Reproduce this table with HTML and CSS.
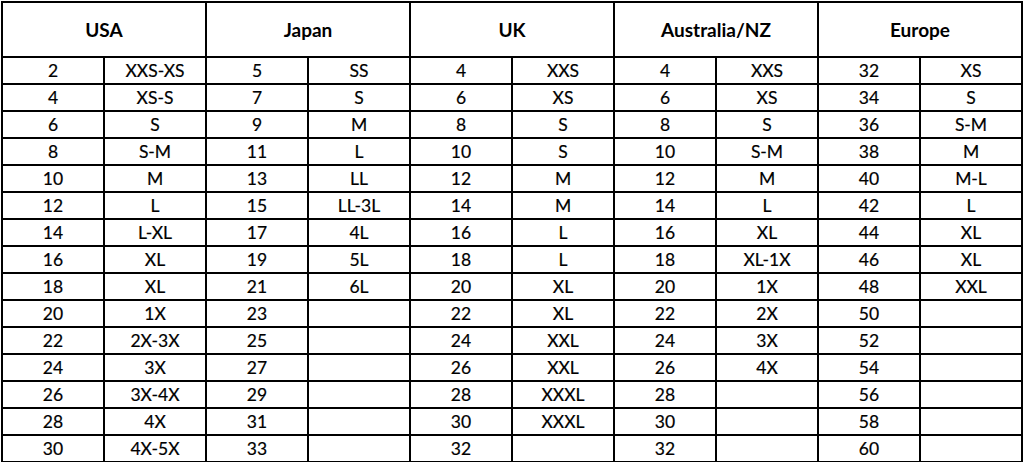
FILE: index.html
```html
<!DOCTYPE html>
<html>
<head>
<meta charset="utf-8">
<link rel="stylesheet" href="styles.css">
</head>
<body>
<table class="sizes">
<colgroup>
<col><col><col><col><col><col><col><col><col><col>
</colgroup>
<thead>
<tr class="head"><th colspan="2">USA</th><th colspan="2">Japan</th><th colspan="2">UK</th><th colspan="2">Australia/NZ</th><th colspan="2">Europe</th></tr>
</thead>
<tbody>
<tr><td>2</td><td>XXS-XS</td><td>5</td><td>SS</td><td>4</td><td>XXS</td><td>4</td><td>XXS</td><td>32</td><td>XS</td></tr>
<tr><td>4</td><td>XS-S</td><td>7</td><td>S</td><td>6</td><td>XS</td><td>6</td><td>XS</td><td>34</td><td>S</td></tr>
<tr><td>6</td><td>S</td><td>9</td><td>M</td><td>8</td><td>S</td><td>8</td><td>S</td><td>36</td><td>S-M</td></tr>
<tr><td>8</td><td>S-M</td><td>11</td><td>L</td><td>10</td><td>S</td><td>10</td><td>S-M</td><td>38</td><td>M</td></tr>
<tr><td>10</td><td>M</td><td>13</td><td>LL</td><td>12</td><td>M</td><td>12</td><td>M</td><td>40</td><td>M-L</td></tr>
<tr><td>12</td><td>L</td><td>15</td><td>LL-3L</td><td>14</td><td>M</td><td>14</td><td>L</td><td>42</td><td>L</td></tr>
<tr><td>14</td><td>L-XL</td><td>17</td><td>4L</td><td>16</td><td>L</td><td>16</td><td>XL</td><td>44</td><td>XL</td></tr>
<tr><td>16</td><td>XL</td><td>19</td><td>5L</td><td>18</td><td>L</td><td>18</td><td>XL-1X</td><td>46</td><td>XL</td></tr>
<tr><td>18</td><td>XL</td><td>21</td><td>6L</td><td>20</td><td>XL</td><td>20</td><td>1X</td><td>48</td><td>XXL</td></tr>
<tr><td>20</td><td>1X</td><td>23</td><td></td><td>22</td><td>XL</td><td>22</td><td>2X</td><td>50</td><td></td></tr>
<tr><td>22</td><td>2X-3X</td><td>25</td><td></td><td>24</td><td>XXL</td><td>24</td><td>3X</td><td>52</td><td></td></tr>
<tr><td>24</td><td>3X</td><td>27</td><td></td><td>26</td><td>XXL</td><td>26</td><td>4X</td><td>54</td><td></td></tr>
<tr><td>26</td><td>3X-4X</td><td>29</td><td></td><td>28</td><td>XXXL</td><td>28</td><td></td><td>56</td><td></td></tr>
<tr><td>28</td><td>4X</td><td>31</td><td></td><td>30</td><td>XXXL</td><td>30</td><td></td><td>58</td><td></td></tr>
<tr><td>30</td><td>4X-5X</td><td>33</td><td></td><td>32</td><td></td><td>32</td><td></td><td>60</td><td></td></tr>
</tbody>
</table>
</body>
</html>
```
FILE: styles.css
```css
html, body {
  margin: 0;
  padding: 0;
  background: #fff;
}
.sizes {
  border-collapse: collapse;
  table-layout: fixed;
  width: 1022px;
  font-family: Lato, "Open Sans", sans-serif;
  color: #000;
  margin-left: 1px;
  margin-top: 1px;
}
.sizes th, .sizes td {
  border: 2px solid #000;
  padding: 0;
  text-align: center;
  white-space: nowrap;
  overflow: hidden;
}
.sizes th {
  height: 53px;
  font-size: 19px;
  font-weight: 700;
}
.sizes td {
  height: 24px;
  padding-top: 1px;
  line-height: 22px;
  font-size: 17.5px;
  font-weight: 400;
  -webkit-text-stroke: 0.2px #000;
}
```
